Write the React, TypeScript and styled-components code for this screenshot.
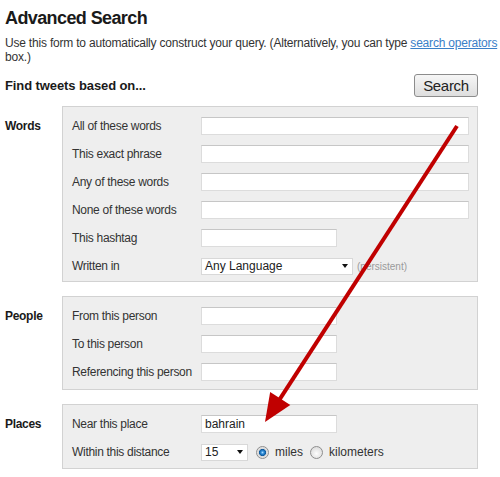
import React from "react";
import styled, { createGlobalStyle } from "styled-components";

const GlobalStyle = createGlobalStyle`
  html, body { margin: 0; padding: 0; background: #fff; }
  body { font-family: "Liberation Sans", Arial, sans-serif; color: #333; }
`;

const Page = styled.div`
  position: relative;
  width: 500px;
  height: 477px;
  overflow: hidden;
  box-sizing: border-box;
  padding: 7px 22px 0 5px;
`;

const Title = styled.h1`
  margin: 0;
  font-size: 18px;
  line-height: 22px;
  font-weight: bold;
  letter-spacing: -0.6px;
  color: #1a1a1a;
`;

const Intro = styled.div`
  margin-top: 7px;
  font-size: 12px;
  line-height: 14px;
  color: #333;
  letter-spacing: -0.2px;
`;

const IntroLine = styled.div`
  white-space: nowrap;
`;

const Link = styled.a`
  color: #3a80c8;
  text-decoration: underline;
`;

const Toolbar = styled.div`
  display: flex;
  justify-content: space-between;
  align-items: center;
  margin-top: 10px;
`;

const Heading = styled.h2`
  margin: 0;
  font-size: 13px;
  font-weight: bold;
  letter-spacing: -0.1px;
  color: #1a1a1a;
`;

const Button = styled.button`
  width: 64px;
  height: 23px;
  box-sizing: border-box;
  padding: 0;
  border: 1px solid #8c8c8c;
  border-radius: 3px;
  background: linear-gradient(#f6f6f6, #dedede);
  font-family: "Liberation Sans", Arial, sans-serif;
  font-size: 15px;
  color: #222;
  letter-spacing: -0.3px;
`;

const Sections = styled.div`
  display: flex;
  flex-direction: column;
  gap: 14px;
  margin-top: 9px;
`;

const Section = styled.section`
  display: grid;
  grid-template-columns: 57px 416px;
  align-items: start;
`;

const SectionLabel = styled.div`
  padding-top: 6px;
  line-height: 28px;
  font-size: 12px;
  font-weight: bold;
  letter-spacing: -0.3px;
  color: #1a1a1a;
`;

const Panel = styled.div<{ $padBottom: number }>`
  background: #eeeeee;
  border: 1px solid #d2d2d2;
  padding: 5px 0 ${(p) => p.$padBottom}px 9px;
`;

const Row = styled.div`
  display: grid;
  grid-template-columns: 129px auto;
  align-items: center;
  height: 28px;
`;

const Label = styled.div`
  font-size: 12px;
  letter-spacing: -0.3px;
  color: #333;
`;

const Controls = styled.div`
  display: flex;
  align-items: center;
`;

const TextInput = styled.input<{ $width: number }>`
  width: ${(p) => p.$width}px;
  height: 18px;
  box-sizing: border-box;
  border: 1px solid #dcdcdc;
  border-top-color: #c6c6c6;
  background: #fff;
  padding: 0 3px;
  font-family: "Liberation Sans", Arial, sans-serif;
  font-size: 12px;
  color: #222;
  outline: none;
`;

const Select = styled.div<{ $width: number }>`
  display: flex;
  justify-content: space-between;
  align-items: center;
  width: ${(p) => p.$width}px;
  height: 17px;
  box-sizing: border-box;
  border: 1px solid #d8d8d8;
  background: #fff;
  padding: 0 4px 0 3px;
  font-size: 12px;
  color: #222;
`;

const Caret = styled.span`
  width: 0;
  height: 0;
  border-left: 3.5px solid transparent;
  border-right: 3.5px solid transparent;
  border-top: 4px solid #111;
`;

const Hint = styled.span`
  margin-left: 4px;
  font-size: 10px;
  color: #9a9a9a;
`;

const RadioGroup = styled.div`
  display: flex;
  align-items: center;
  gap: 6px;
  margin-left: 8px;
  font-size: 12px;
  color: #333;
`;

const RadioText = styled.span`
  margin-right: 1px;
`;

const Radio = styled.span<{ $checked?: boolean }>`
  width: 13px;
  height: 13px;
  box-sizing: border-box;
  border-radius: 50%;
  border: 1px solid #8e8e8e;
  background: ${(p) =>
    p.$checked
      ? "radial-gradient(circle at 50% 50%, #a8dcff 0, #2d8ad6 1.6px, #0d5a9e 3.2px, #d8d8d8 3.9px, #f8f8f8 100%)"
      : "radial-gradient(circle at 50% 60%, #ffffff 0, #f3f3f3 2px, #d4d4d4 100%)"};
`;

const Overlay = styled.svg`
  position: absolute;
  left: 0;
  top: 0;
  pointer-events: none;
`;

type Field = { label: string; width: number; value?: string };

const words: Field[] = [
  { label: "All of these words", width: 268 },
  { label: "This exact phrase", width: 268 },
  { label: "Any of these words", width: 268 },
  { label: "None of these words", width: 268 },
  { label: "This hashtag", width: 136 },
];

const people: Field[] = [
  { label: "From this person", width: 136 },
  { label: "To this person", width: 136 },
  { label: "Referencing this person", width: 136 },
];

const InputRow = ({ f }: { f: Field }) => (
  <Row>
    <Label>{f.label}</Label>
    <Controls>
      <TextInput $width={f.width} defaultValue={f.value ?? ""} />
    </Controls>
  </Row>
);

// arrow geometry
const tip = { x: 265, y: 422 };
const start = { x: 457, y: 126 };
const dx = tip.x - start.x;
const dy = tip.y - start.y;
const len = Math.hypot(dx, dy);
const ux = dx / len;
const uy = dy / len;
const headLen = 28;
const headHalf = 12;
const base = { x: tip.x - ux * headLen, y: tip.y - uy * headLen };
const w1 = { x: base.x + uy * headHalf, y: base.y - ux * headHalf };
const w2 = { x: base.x - uy * headHalf, y: base.y + ux * headHalf };

export default function App() {
  return (
    <>
      <GlobalStyle />
      <Page>
        <Title>Advanced Search</Title>
        <Intro>
          <IntroLine>
            Use this form to automatically construct your query. (Alternatively, you can type{" "}
            <Link href="#">search operators</Link>
          </IntroLine>
          <IntroLine>box.)</IntroLine>
        </Intro>
        <Toolbar>
          <Heading>Find tweets based on...</Heading>
          <Button>Search</Button>
        </Toolbar>
        <Sections>
          <Section>
            <SectionLabel>Words</SectionLabel>
            <Panel $padBottom={1}>
              {words.map((f) => (
                <InputRow key={f.label} f={f} />
              ))}
              <Row>
                <Label>Written in</Label>
                <Controls>
                  <Select $width={152}>
                    <span>Any Language</span>
                    <Caret />
                  </Select>
                  <Hint>(persistent)</Hint>
                </Controls>
              </Row>
            </Panel>
          </Section>
          <Section>
            <SectionLabel>People</SectionLabel>
            <Panel $padBottom={3}>
              {people.map((f) => (
                <InputRow key={f.label} f={f} />
              ))}
            </Panel>
          </Section>
          <Section>
            <SectionLabel>Places</SectionLabel>
            <Panel $padBottom={2}>
              <InputRow f={{ label: "Near this place", width: 136, value: "bahrain" }} />
              <Row>
                <Label>Within this distance</Label>
                <Controls>
                  <Select $width={47}>
                    <span>15</span>
                    <Caret />
                  </Select>
                  <RadioGroup>
                    <Radio $checked />
                    <RadioText>miles</RadioText>
                    <Radio />
                    <RadioText>kilometers</RadioText>
                  </RadioGroup>
                </Controls>
              </Row>
            </Panel>
          </Section>
        </Sections>
        <Overlay width={500} height={477} viewBox="0 0 500 477">
          <line
            x1={start.x}
            y1={start.y}
            x2={base.x + ux * 2}
            y2={base.y + uy * 2}
            stroke="#c00000"
            strokeWidth={4}
          />
          <polygon
            points={`${tip.x},${tip.y} ${w1.x},${w1.y} ${w2.x},${w2.y}`}
            fill="#c00000"
          />
        </Overlay>
      </Page>
    </>
  );
}
